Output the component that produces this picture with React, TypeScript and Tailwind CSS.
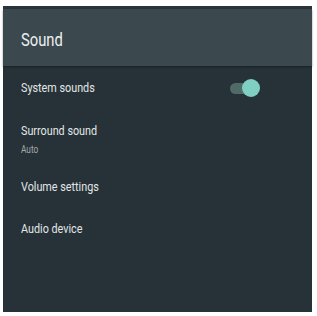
export default function App() {
  return (
    <div className="w-[317px] h-[316px] bg-white pt-[6px] pl-[3px] pr-[5px] pb-[4px] font-['Roboto',sans-serif]">
      <div className="flex h-full flex-col bg-[#263238]">
        {/* header */}
        <div className="h-[3px] bg-[#2b3539]" />
        <div className="flex h-[57px] items-center bg-[#3b494f] pl-[18px] pt-[4px] shadow-[0_1px_2px_rgba(0,0,0,0.4)]">
          <span className="origin-left scale-x-[0.82] text-[18px] text-[#eef0f0]">Sound</span>
        </div>

        <div className="flex flex-col pl-[18px] pr-[58px] text-[13px] text-[#e3e6e6]">
          <div className="flex h-[42px] items-center justify-between pt-[2px]">
            <span className="origin-left scale-x-[0.83]">System sounds</span>
            <div className="relative h-[11px] w-[24px] rounded-full bg-[#4f6a67]">
              <div className="absolute right-[-6px] top-[-4px] h-[18px] w-[18px] rounded-full bg-[#7fcfc2]" />
            </div>
          </div>
          <div className="flex h-[60px] flex-col justify-center pt-[2px]">
            <span className="origin-left scale-x-[0.83]">Surround sound</span>
            <span className="mt-[1px] origin-left scale-x-[0.83] text-[10px] text-[#a4abad]">Auto</span>
          </div>
          <div className="flex h-[38px] items-center">
            <span className="origin-left scale-x-[0.83]">Volume settings</span>
          </div>
          <div className="flex h-[46px] items-center">
            <span className="origin-left scale-x-[0.83]">Audio device</span>
          </div>
        </div>
      </div>
    </div>
  );
}
